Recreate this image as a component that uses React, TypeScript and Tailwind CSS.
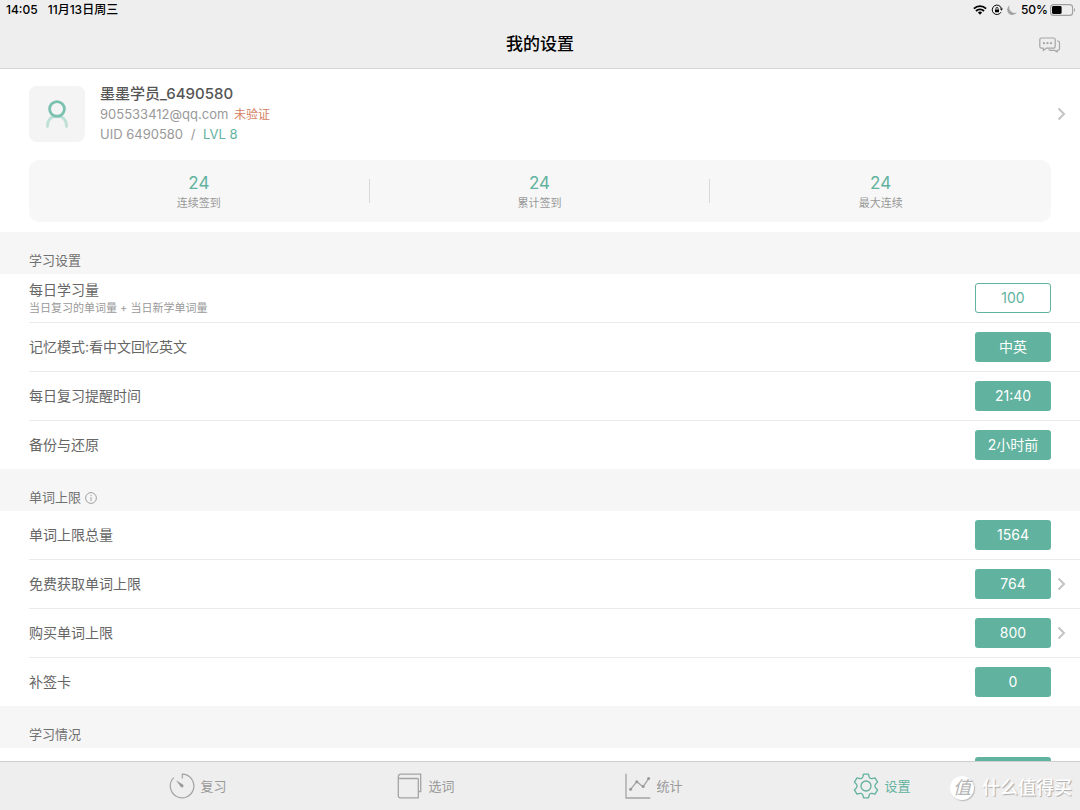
import type { ReactNode } from 'react';

type Item = {
  label: string;
  hint?: string;
  value: string;
  outlined?: boolean;
  link?: boolean;
};

const studyItems: Item[] = [
  { label: '每日学习量', hint: '当日复习的单词量 + 当日新学单词量', value: '100', outlined: true },
  { label: '记忆模式:看中文回忆英文', value: '中英' },
  { label: '每日复习提醒时间', value: '21:40' },
  { label: '备份与还原', value: '2小时前' },
];

const limitItems: Item[] = [
  { label: '单词上限总量', value: '1564' },
  { label: '免费获取单词上限', value: '764', link: true },
  { label: '购买单词上限', value: '800', link: true },
  { label: '补签卡', value: '0' },
];

const progressItems: Item[] = [{ label: '', value: '' }];

const stats = [
  { value: 24, label: '连续签到' },
  { value: 24, label: '累计签到' },
  { value: 24, label: '最大连续' },
];

const Chevron = () => (
  <svg width="9" height="14" viewBox="0 0 9 14" fill="none" stroke="#c4c4c6" strokeWidth="2">
    <path d="M1.5 1.5 7 7l-5.5 5.5" />
  </svg>
);

const WifiIcon = () => (
  <svg width="14" height="10" viewBox="0 0 14 10" fill="none" stroke="#000" strokeWidth="1.9">
    <path d="M.9 3.6a8.700 8.700 0 0 1 12.200 0" />
    <path d="M3 6a5.700 5.700 0 0 1 8 0" />
    <path d="M7 9.800 4.900 7.600a3 3 0 0 1 4.200 0z" fill="#000" stroke="none" />
  </svg>
);

const RotationLockIcon = () => (
  <svg width="12" height="12" viewBox="0 0 12 12" fill="none" stroke="#000">
    <path d="M10.400 4.300A4.700 4.700 0 1 0 10 8.200" strokeWidth="1" />
    <path d="M8.900 4.600h3L10.500 6.800z" fill="#000" stroke="none" />
    <rect x="4" y="5.400" width="4" height="2.900" rx=".4" fill="#000" stroke="none" />
    <path d="M4.900 5.600V4.500a1.100 1.100 0 0 1 2.200 0v1.100" strokeWidth=".8" />
  </svg>
);

const MoonIcon = () => (
  <svg width="10" height="10" viewBox="0 0 10 10" fill="#a3a3a3">
    <path d="M2.800.2A5.200 5.200 0 1 0 9.900 7.300 5.300 5.300 0 0 1 2.800.2z" />
  </svg>
);

const BatteryIcon = () => (
  <svg width="26" height="12" viewBox="0 0 26 12" fill="none">
    <rect x=".6" y=".6" width="22" height="10.800" rx="3" stroke="#a0a0a0" strokeWidth="1.100" />
    <rect x="2" y="2" width="9.600" height="8" rx="1.400" fill="#000" />
    <path d="M24 4v4c1.400-.6 1.400-3.400 0-4z" fill="#a0a0a0" />
  </svg>
);

const MessageIcon = () => (
  <svg width="22" height="16" viewBox="0 0 22 16" fill="none" stroke="#a6a6a6" strokeWidth="1.200" strokeLinejoin="round">
    <path d="M2.400 1h12.200A1.600 1.600 0 0 1 16.200 2.600v7A1.600 1.600 0 0 1 14.600 11.200H7.200L4.300 13.600V11.200H2.400A1.600 1.600 0 0 1 .8 9.600v-7A1.600 1.600 0 0 1 2.400 1z" />
    <path d="M18 4h.8a1.700 1.700 0 0 1 1.700 1.700v6a1.700 1.700 0 0 1-1.700 1.600h-.7v1.800l-2.600-1.800h-4.300a1.700 1.700 0 0 1-1.500-1" />
    <g fill="#a6a6a6" stroke="none">
      <circle cx="5" cy="6.200" r="1.100" />
      <circle cx="8.500" cy="6.200" r="1.100" />
      <circle cx="12" cy="6.200" r="1.100" />
    </g>
  </svg>
);

const UserIcon = () => (
  <svg width="24" height="30" viewBox="0 0 24 30" fill="none" strokeWidth="2.800">
    <path d="M2.500 27.500v-.8c0-6 4.200-9.700 9.500-9.700s9.500 3.700 9.500 9.700v.8" stroke="#bfe0d7" strokeLinecap="round" />
    <circle cx="12" cy="10" r="7.400" stroke="#7bc1af" />
  </svg>
);

const InfoIcon = () => (
  <svg width="12" height="12" viewBox="0 0 12 12" fill="none" stroke="#999" strokeWidth=".9">
    <circle cx="6" cy="6" r="5.400" />
    <path d="M6 5v4M6 2.900v1.200" />
  </svg>
);

const ReviewIcon = () => (
  <svg width="26" height="26" viewBox="0 0 26 26" fill="none" stroke="#a4a4a4" strokeWidth="1.200">
    <path d="M13.300 5.500V1.200A11.800 11.800 0 1 1 4.800 4.600" />
    <path d="m7 7.200 7.200 4.600a1.600 1.600 0 0 1-2.300 2.200z" fill="#999" stroke="none" />
  </svg>
);

const BookIcon = () => (
  <svg width="26" height="26" viewBox="0 0 26 26" fill="none" stroke="#a4a4a4" strokeWidth="1.300">
    <path d="M21.300 5.500v19.300H3a1.700 1.700 0 0 1-1.700-1.700V4c0-1.700.8-2.800 2.600-2.800h19.800v17.500h-2.200" />
    <path d="M1.400 4.900c.3.500.8.600 1.600.600h18.300" />
  </svg>
);

const ChartIcon = () => (
  <svg width="26" height="26" viewBox="0 0 26 26" fill="none" stroke="#a4a4a4" strokeWidth="1.300">
    <path d="M1 .8v24.200h24.300" />
    <path d="m5.600 16.300 6.200-7.600 6.300 5L23.600 5.600" />
    <g fill="#999" stroke="none">
      <circle cx="5.600" cy="16.300" r="1.500" />
      <circle cx="11.800" cy="8.700" r="1.500" />
      <circle cx="18.100" cy="13.600" r="1.500" />
      <circle cx="23.600" cy="5.600" r="1.500" />
    </g>
  </svg>
);

const GearIcon = () => (
  <svg width="26" height="26" viewBox="0 0 26 26" fill="none" stroke="#61b29e" strokeWidth="1.300" strokeLinejoin="round">
    <circle cx="13" cy="13" r="5" />
    <path d="M10.500 1.200h5l.7 2.800c.4 1 1.700 1.800 2.800 1.600l3-.8 2.600 4.300-2.100 2.200c-.7.900-.7 2.500 0 3.400l2.100 2.200-2.600 4.300-3-.8c-1.100-.2-2.400.6-2.800 1.600l-.7 2.800h-5L9.800 22c-.4-1-1.700-1.800-2.800-1.600l-3 .8-2.600-4.300 2.100-2.200c.7-.9.700-2.500 0-3.400L1.400 9.100 4 4.800l3 .8C8.100 5.800 9.400 5 9.800 4z" />
  </svg>
);

const tabs = [
  { label: '复习', icon: <ReviewIcon /> },
  { label: '选词', icon: <BookIcon /> },
  { label: '统计', icon: <ChartIcon /> },
  { label: '设置', icon: <GearIcon />, active: true },
];

const Row = ({ item }: { item: Item }) => (
  <li className="ml-[29px] box-content flex min-h-12 items-center border-b border-[#ebebeb] last:border-b-0">
    <div className="flex-1">
      <p className="text-sm leading-5 text-[#666]">{item.label}</p>
      {item.hint && <p className="text-[11px] leading-4 text-[#999]">{item.hint}</p>}
    </div>
    <button
      type="button"
      aria-label={item.label ? undefined : '学习情况'}
      className={
        item.outlined
          ? 'h-[30px] w-19 rounded-[3px] border border-[#61b29e] text-sm text-[#61b29e]'
          : 'h-[30px] w-19 rounded-[3px] bg-[#61b29e] text-sm text-white'
      }
    >
      {item.value}
    </button>
    <span className="w-[29px] pl-1.5">{item.link && <Chevron />}</span>
  </li>
);

const Section = ({ title, extra, items }: { title: string; extra?: ReactNode; items: Item[] }) => (
  <section>
    <div className="flex h-[42px] items-end gap-1 bg-[#f6f6f6] px-[29px] pb-1">
      <h2 className="text-[13px] leading-5 text-[#707070]">{title}</h2>
      {extra}
    </div>
    <ul>
      {items.map((item) => (
        <Row key={item.label} item={item} />
      ))}
    </ul>
  </section>
);

export default function App() {
  return (
    <div className="flex h-screen flex-col overflow-hidden bg-white font-['Inter','Noto_Sans_CJK_SC',sans-serif]">
      <header className="border-b border-[#d6d6d6] bg-[#eeeeee]">
        <div className="flex h-5 items-center justify-between pr-1 pl-1.5 text-xs font-medium text-black">
          <div className="flex gap-2.5">
            <span>14:05</span>
            <span>11月13日周三</span>
          </div>
          <div className="flex items-center">
            <WifiIcon />
            <span className="ml-1">
              <RotationLockIcon />
            </span>
            <span className="mx-1">
              <MoonIcon />
            </span>
            <span className="mr-0.5">50%</span>
            <BatteryIcon />
          </div>
        </div>
        <div className="grid h-12 grid-cols-[1fr_auto_1fr] items-center px-[19px]">
          <h1 className="col-start-2 text-[17px] leading-6 font-medium text-black">我的设置</h1>
          <button type="button" aria-label="消息" className="justify-self-end pt-0.5">
            <MessageIcon />
          </button>
        </div>
      </header>

      <main className="min-h-0 flex-1 overflow-hidden">
        <div className="pt-[15px] pb-2.5">
          <a href="#profile" className="flex items-center pl-[29px]">
            <div className="flex size-14 items-center justify-center rounded-lg bg-[#f4f4f4]">
              <UserIcon />
            </div>
            <div className="ml-[15px] flex-1 text-[13px] leading-5 text-[#999]">
              <p className="text-[15px] leading-5 font-medium text-[#555]">墨墨学员_6490580</p>
              <p>
                905533412@qq.com <span className="ml-0.5 text-xs text-[#d5805f]">未验证</span>
              </p>
              <p>
                UID 6490580 <span className="mx-1">/</span> <span className="text-[#61b29e]">LVL 8</span>
              </p>
            </div>
            <span className="w-[23px]">
              <Chevron />
            </span>
          </a>
          <div className="mx-[29px] mt-4 grid h-[62px] grid-cols-3 items-center divide-x divide-[#d9d9d9] rounded-[10px] bg-[#f7f7f7]">
            {stats.map((stat) => (
              <div key={stat.label} className="flex h-6 flex-col items-center justify-center">
                <span className="text-[17px] leading-6 text-[#61b29e]">{stat.value}</span>
                <span className="text-[11px] leading-4 text-[#999]">{stat.label}</span>
              </div>
            ))}
          </div>
        </div>

        <Section title="学习设置" items={studyItems} />
        <Section
          title="单词上限"
          items={limitItems}
          extra={
            <button type="button" aria-label="说明" className="pb-[3px]">
              <InfoIcon />
            </button>
          }
        />
        <Section title="学习情况" items={progressItems} />
      </main>

      <nav className="relative flex h-[49px] border-t border-[#cfcfcf] bg-[#eeeeee] px-[84px]">
        {tabs.map((tab) => (
          <button
            key={tab.label}
            type="button"
            className={
              tab.active
                ? 'flex flex-1 items-center justify-center gap-[5px] text-[13px] text-[#61b29e]'
                : 'flex flex-1 items-center justify-center gap-[5px] text-[13px] text-[#999]'
            }
          >
            {tab.icon}
            <span className="pt-0.5">{tab.label}</span>
          </button>
        ))}
        <div className="absolute right-2 bottom-2 flex items-center gap-2 text-white">
          <span className="flex size-6 items-center justify-center rounded-full bg-white text-lg leading-6 text-[#b5b5b5] italic shadow-[1px_1px_1px_#bbb]">
            值
          </span>
          <span className="text-lg leading-7 font-medium text-shadow-[1px_1px_1px_#aaa]">什么值得买</span>
        </div>
      </nav>
    </div>
  );
}
